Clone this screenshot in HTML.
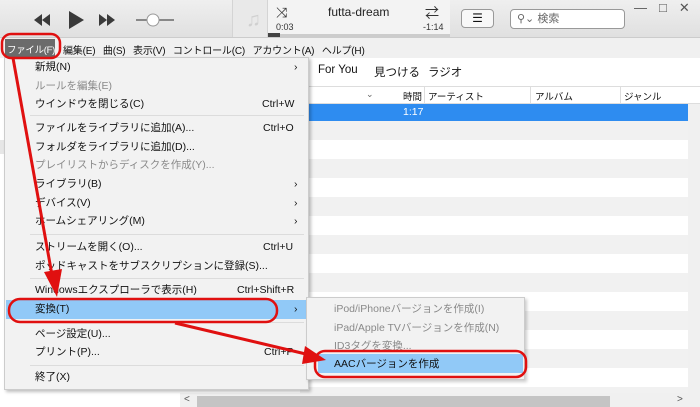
<!DOCTYPE html>
<html><head><meta charset="utf-8"><style>
*{margin:0;padding:0;box-sizing:border-box}
body{width:700px;height:407px;overflow:hidden;position:relative;background:#fff;font-family:"Liberation Sans","Noto Sans CJK JP",sans-serif;font-size:11px;color:#111}
.a{position:absolute;white-space:nowrap}
.mi{position:absolute;left:35px;font-size:10.5px;line-height:12px}
.dis{color:#8a8a8a}
.sc{position:absolute;font-size:10.5px;line-height:12px}
.sep{position:absolute;left:30px;width:274px;height:1px;background:#dcdcdc}
</style></head><body>
<div class="a" style="left:0;top:0;width:700px;height:38px;background:linear-gradient(#efefef,#e0e0e0);border-bottom:1px solid #ccc"></div>
<svg class="a" style="left:30px;top:8px" width="150" height="24" viewBox="0 0 150 24">
<path d="M4 12 L12 6 V18Z M12 12 L20 6 V18Z" fill="#3a3a3a"/>
<path d="M39 3 L54 12 L39 21Z" fill="#3a3a3a"/>
<path d="M69 6 L77 12 L69 18Z M77 6 L85 12 L77 18Z" fill="#3a3a3a"/>
<line x1="106" y1="12" x2="144" y2="12" stroke="#888" stroke-width="2"/>
<circle cx="123" cy="12" r="6" fill="#fff" stroke="#999"/>
</svg>
<div class="a" style="left:232px;top:0;width:36px;height:37px;background:#e9e9e9;border-left:1px solid #d4d4d4;border-right:1px solid #d4d4d4"></div>
<div class="a" style="left:246px;top:9px;font-size:20px;color:#d0d0d0">♫</div>
<div class="a" style="left:268px;top:0;width:182px;height:37px;background:#f3f3f3"></div>
<div class="a" style="left:276px;top:4px;font-size:14px;color:#333">⤨</div>
<div class="a" style="left:276px;top:22px;font-size:9px;color:#333">0:03</div>
<div class="a" style="left:328px;top:5px;font-size:12px;color:#222">futta-dream</div>
<div class="a" style="left:425px;top:3px;font-size:14px;color:#333">⇄</div>
<div class="a" style="left:423px;top:22px;font-size:9px;color:#333">-1:14</div>
<div class="a" style="left:268px;top:34px;width:182px;height:3px;background:#ccc"></div>
<div class="a" style="left:268px;top:33px;width:12px;height:4px;background:#444"></div>
<div class="a" style="left:461px;top:9px;width:33px;height:19px;border:1px solid #999;border-radius:4px;background:#f8f8f8;text-align:center;line-height:17px;font-size:12px">☰</div>
<div class="a" style="left:510px;top:9px;width:115px;height:20px;border:1px solid #999;border-radius:4px;background:#fff;padding-left:6px;line-height:18px;color:#666">⚲⌄ 検索</div>
<div class="a" style="left:634px;top:0px;font-size:13px;color:#555;letter-spacing:12px">—□✕</div>
<div class="a" style="left:0;top:38px;width:700px;height:20px;background:#f0f0f0"></div>
<div class="a" style="left:5px;top:39px;width:50px;height:19px;background:#6b6b6b"></div>
<div class="a" style="left:7px;top:42px;font-size:9.5px;color:#fff;letter-spacing:-0.3px">ファイル(F)</div>
<div class="a" style="left:63px;top:42px;font-size:10px;word-spacing:5px;letter-spacing:-0.2px">編集(E) 曲(S) 表示(V) コントロール(C) アカウント(A) ヘルプ(H)</div>
<div class="a" style="left:0;top:58px;width:700px;height:349px;background:#fff"></div>
<div class="a" style="left:318px;top:64px;font-size:11.5px">For You</div>
<div class="a" style="left:374px;top:64px;font-size:11.5px">見つける</div>
<div class="a" style="left:428px;top:64px;font-size:11.5px">ラジオ</div>
<div class="a" style="left:300px;top:86px;width:400px;height:18px;border-top:1px solid #ddd;border-bottom:1px solid #ddd"></div>
<div class="a" style="left:366px;top:89px;font-size:9px;color:#666">⌄</div>
<div class="a" style="left:403px;top:89px;font-size:9.5px">時間</div>
<div class="a" style="left:424px;top:87px;width:1px;height:16px;background:#ddd"></div>
<div class="a" style="left:428px;top:89px;font-size:9.5px">アーティスト</div>
<div class="a" style="left:530px;top:87px;width:1px;height:16px;background:#ddd"></div>
<div class="a" style="left:535px;top:89px;font-size:9.5px">アルバム</div>
<div class="a" style="left:620px;top:87px;width:1px;height:16px;background:#ddd"></div>
<div class="a" style="left:624px;top:89px;font-size:9.5px">ジャンル</div>
<div class="a" style="left:300px;top:104px;width:388px;height:17px;background:#2e8cf0"></div>
<div class="a" style="left:403px;top:106px;color:#fff;font-size:10.5px">1:17</div>
<div class="a" style="left:300px;top:121px;width:388px;height:272px;background:repeating-linear-gradient(#f1f1f1 0 19px,#fff 19px 38px)"></div>
<div class="a" style="left:688px;top:104px;width:12px;height:303px;background:#f0f0f0"></div>
<div class="a" style="left:0;top:140px;width:5px;height:14px;background:#e6e6e6"></div>
<div class="a" style="left:180px;top:393px;width:520px;height:14px;background:#f0f0f0"></div>
<div class="a" style="left:184px;top:394px;font-size:10px;color:#555">&lt;</div>
<div class="a" style="left:197px;top:396px;width:413px;height:11px;background:#c4c4c4"></div>
<div class="a" style="left:677px;top:394px;font-size:10px;color:#555">&gt;</div>
<div class="a" style="left:4px;top:57px;width:305px;height:333px;background:#f2f2f2;border:1px solid #ccc;box-shadow:2px 2px 3px rgba(0,0,0,.25)"></div>
<div class="mi" style="top:61px">新規(N)</div><div class="sc" style="left:294px;top:61px">›</div>
<div class="mi dis" style="top:80px">ルールを編集(E)</div>
<div class="mi" style="top:98px">ウインドウを閉じる(C)</div><div class="sc" style="left:262px;top:98px">Ctrl+W</div>
<div class="sep" style="top:115px"></div>
<div class="mi" style="top:122px">ファイルをライブラリに追加(A)...</div><div class="sc" style="left:263px;top:122px">Ctrl+O</div>
<div class="mi" style="top:141px">フォルダをライブラリに追加(D)...</div>
<div class="mi dis" style="top:159px">プレイリストからディスクを作成(Y)...</div>
<div class="mi" style="top:178px">ライブラリ(B)</div><div class="sc" style="left:294px;top:178px">›</div>
<div class="mi" style="top:197px">デバイス(V)</div><div class="sc" style="left:294px;top:197px">›</div>
<div class="mi" style="top:215px">ホームシェアリング(M)</div><div class="sc" style="left:294px;top:215px">›</div>
<div class="sep" style="top:234px"></div>
<div class="mi" style="top:241px">ストリームを開く(O)...</div><div class="sc" style="left:263px;top:241px">Ctrl+U</div>
<div class="mi" style="top:260px">ポッドキャストをサブスクリプションに登録(S)...</div>
<div class="sep" style="top:278px"></div>
<div class="mi" style="top:284px">Windowsエクスプローラで表示(H)</div><div class="sc" style="left:237px;top:284px">Ctrl+Shift+R</div>
<div class="a" style="left:6px;top:300px;width:302px;height:19px;background:#91c9f7"></div>
<div class="mi" style="top:303px">変換(T)</div><div class="sc" style="left:294px;top:303px">›</div>
<div class="sep" style="top:322px"></div>
<div class="mi" style="top:328px">ページ設定(U)...</div>
<div class="mi" style="top:346px">プリント(P)...</div><div class="sc" style="left:264px;top:346px">Ctrl+P</div>
<div class="sep" style="top:365px"></div>
<div class="mi" style="top:371px">終了(X)</div>
<div class="a" style="left:306px;top:297px;width:219px;height:83px;background:#f2f2f2;border:1px solid #ccc;box-shadow:2px 2px 3px rgba(0,0,0,.2)"></div>
<div class="mi dis" style="left:334px;top:303px">iPod/iPhoneバージョンを作成(I)</div>
<div class="mi dis" style="left:334px;top:322px">iPad/Apple TVバージョンを作成(N)</div>
<div class="mi dis" style="left:334px;top:340px">ID3タグを変換...</div>
<div class="a" style="left:318px;top:354px;width:205px;height:19px;background:#91c9f7"></div>
<div class="mi" style="left:334px;top:358px">AACバージョンを作成</div>
<svg class="a" style="left:0;top:0" width="700" height="407">
<g fill="none" stroke="#e01010" stroke-width="2.5">
<rect x="2" y="34" width="58" height="24" rx="9"/>
<rect x="9" y="299" width="268" height="23" rx="11"/>
<rect x="315" y="351" width="211" height="26" rx="10"/>
<line x1="13" y1="58" x2="52" y2="275" stroke-width="3"/>
<line x1="175" y1="323" x2="310" y2="355" stroke-width="3"/>
</g>
<path d="M44 272 L62 269 L57 297Z" fill="#e01010"/>
<path d="M305 346 L326 360 L302 364Z" fill="#e01010"/>
</svg>
</body></html>
